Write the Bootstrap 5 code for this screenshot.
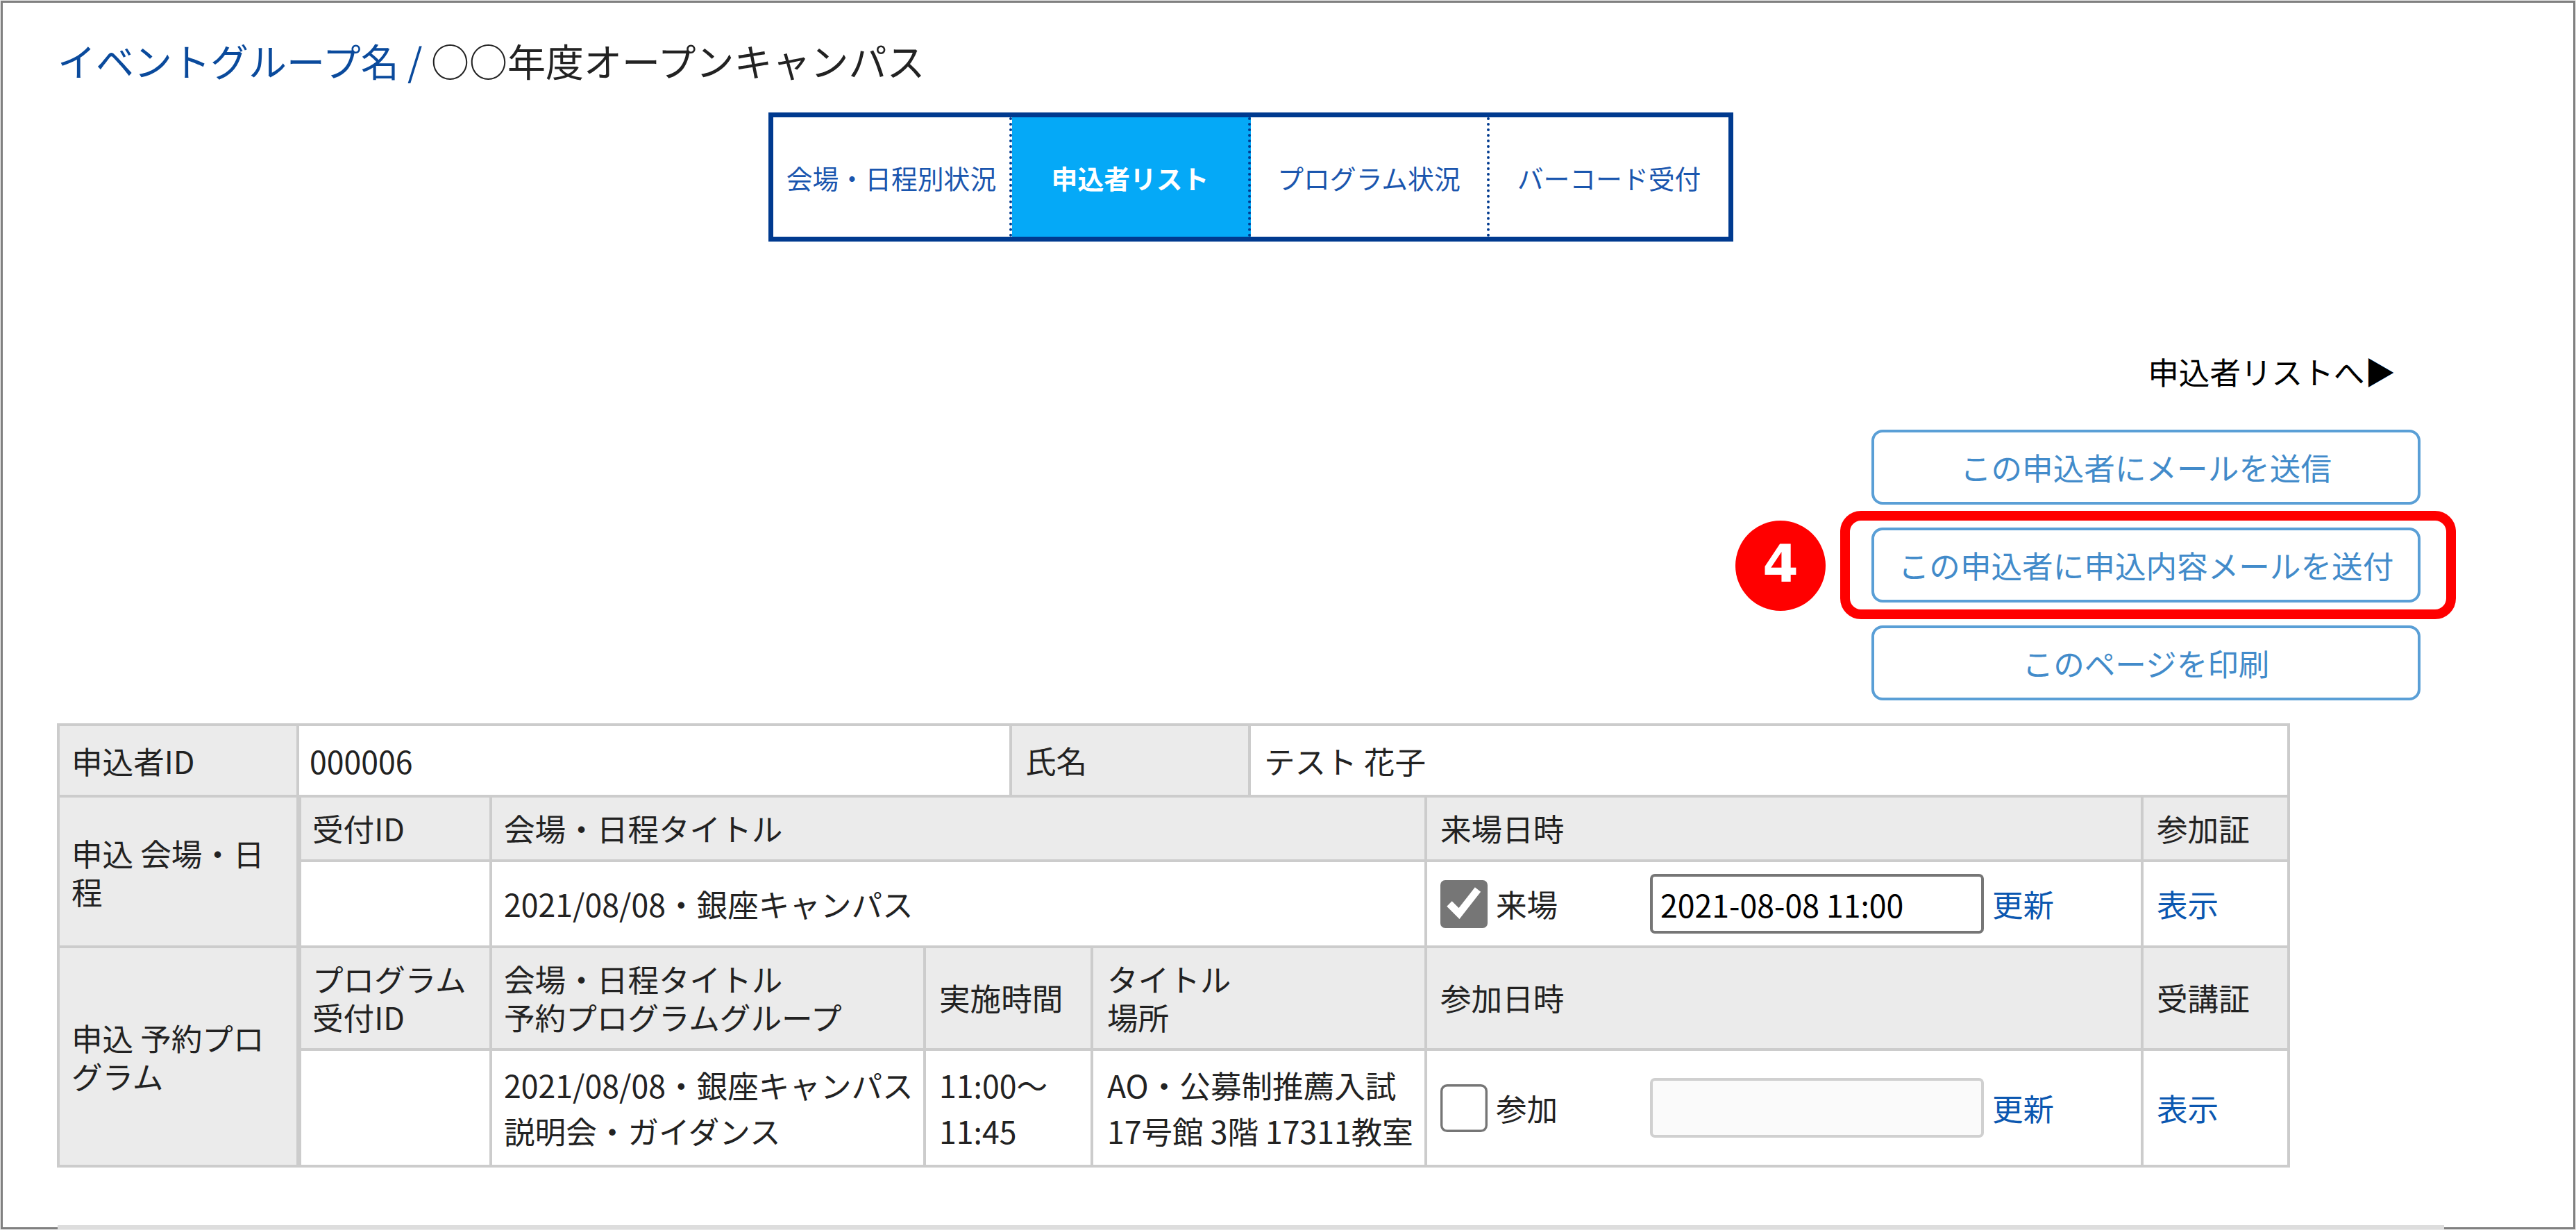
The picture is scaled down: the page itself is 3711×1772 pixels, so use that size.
<!DOCTYPE html>
<html lang="ja">
<head>
    <meta charset="UTF-8">
    <meta name="viewport" content="width=device-width, initial-scale=1.0">
    <title>申込者リスト</title>
    <link href="https://cdn.jsdelivr.net/npm/bootstrap@5.3.0/dist/css/bootstrap.min.css" rel="stylesheet">
    <style>
        body {
            font-family: "Noto Sans CJK JP", sans-serif;
            font-size: 44.6px;
            line-height: 66px;
            color: #222;
            background: #fff;
        }
        a { text-decoration: none; color: #0b57b0; }

        .page-frame {
            width: 3711px;
            height: 1772px;
            border: 1px solid #e9e9e9;
            overflow: hidden;
        }
        .page-inner {
            height: 100%;
            border: 3px solid #808080;
            padding: 0 0 0 79px;
        }

        .page-title { font-size: 55px; line-height: 80px; padding-top: 42px; margin-bottom: 36px; font-weight: 400; }
        .page-title a { color: #0a4a9c; }

        .event-tabs {
            width: 1390px;
            height: 186px;
            margin-left: 1024px;
            border: 7px solid #003a8f;
        }
        .event-tabs .nav-link {
            font-size: 37.8px;
            color: #1a56ae;
            padding: 2px 0 0;
            border-radius: 0;
            border-right: 4px dotted #003a8f;
            white-space: nowrap;
        }
        .event-tabs .nav-link:last-child { border-right: 0; }
        .event-tabs .nav-link.active { background: #05a9f7; color: #fff; font-weight: 700; }

        .side-actions { width: 791px; margin-left: 2613px; padding-top: 154px; }
        .to-list { color: #000; padding-right: 36px; margin-bottom: 51px; }
        .btn-action {
            height: 108px;
            margin-bottom: 33px;
            padding: 0;
            font-size: 44.6px;
            color: #428bca;
            border: 4px solid #5a9fd6;
            border-radius: 16px;
            background: #fff;
        }
        .callout-frame {
            position: absolute;
            left: -45px;
            top: -24px;
            width: 887px;
            height: 156px;
            border: 14px solid #f00;
            border-radius: 30px;
        }
        .callout-num {
            position: absolute;
            left: -196px;
            top: -10px;
            width: 130px;
            height: 130px;
            background: #f00;
            color: #fff;
            font: 700 74px/125px "DejaVu Sans", sans-serif;
        }

        .detail-table {
            width: 3213px;
            table-layout: fixed;
            border-collapse: collapse;
            margin-left: -1px;
        }
        .detail-table th, .detail-table td {
            border: 4px solid #ccc;
            padding: 0 0 0 19px;
            vertical-align: middle;
            text-align: left;
            font-weight: 400;
            white-space: nowrap;
        }
        .detail-table th { background: #ebebeb; line-height: 55px; padding-bottom: 3px; }
        .detail-table .row-head { padding: 0 14px 0 15px; white-space: normal; }
        .detail-table .row-head:first-child { padding-left: 17px; }
        .detail-table .inner-first { box-shadow: inset 3px 0 #ccc; }
        .detail-table .venue-col { padding-left: 17px; }
        .detail-table .place-col { padding-left: 20px; }

        .tick-box { width: 68px; height: 69px; margin-right: 12px; }
        .state-label { width: 222px; }
        .date-input {
            width: 481px;
            height: 86px;
            padding: 0 11px;
            font-size: 44.6px;
            color: #000;
            border: 4px solid #767676;
            border-radius: 7px;
            margin-right: 12px;
        }
        .date-input:disabled { background: #fafafa; border-color: #d0d0d0; }

        .next-block { width: 3438px; height: 8px; margin-top: 83px; background: #ddd; }
    </style>
</head>
<body>
    <div class="page-frame">
        <div class="page-inner">
            <h1 class="page-title"><a href="#">イベントグループ名 /</a> ○○年度オープンキャンパス</h1>

            <nav class="event-tabs nav nav-pills nav-fill flex-nowrap">
                <a class="nav-link d-flex w-25 align-items-center justify-content-center" href="#">会場・日程別状況</a>
                <a class="nav-link d-flex w-25 align-items-center justify-content-center active" href="#">申込者リスト</a>
                <a class="nav-link d-flex w-25 align-items-center justify-content-center" href="#">プログラム状況</a>
                <a class="nav-link d-flex w-25 align-items-center justify-content-center" href="#">バーコード受付</a>
            </nav>

            <div class="side-actions d-flex flex-column">
                <a class="to-list text-end" href="#">申込者リストへ▶</a>
                <button type="button" class="btn btn-action">この申込者にメールを送信</button>
                <div class="position-relative d-flex flex-column">
                    <button type="button" class="btn btn-action">この申込者に申込内容メールを送付</button>
                    <div class="callout-frame"></div>
                    <div class="callout-num rounded-circle text-center">4</div>
                </div>
                <button type="button" class="btn btn-action">このページを印刷</button>
            </div>

            <table class="detail-table">
                <colgroup>
                    <col style="width: 345px">
                    <col style="width: 278px">
                    <col style="width: 625px">
                    <col style="width: 124px">
                    <col style="width: 117px">
                    <col style="width: 227px">
                    <col style="width: 254px">
                    <col style="width: 1032px">
                    <col style="width: 211px">
                </colgroup>
                <tbody>
                    <tr style="height: 103px">
                        <th class="row-head">申込者ID</th>
                        <td class="row-head" colspan="3">000006</td>
                        <th colspan="2">氏名</th>
                        <td colspan="3">テスト 花子</td>
                    </tr>
                    <tr style="height: 93px">
                        <th class="row-head" rowspan="2">申込 会場・日程</th>
                        <th class="inner-first">受付ID</th>
                        <th class="venue-col" colspan="5">会場・日程タイトル</th>
                        <th>来場日時</th>
                        <th>参加証</th>
                    </tr>
                    <tr style="height: 124px">
                        <td class="inner-first"></td>
                        <td class="venue-col" colspan="5">2021/08/08・銀座キャンパス</td>
                        <td>
                            <div class="d-flex align-items-center">
                                <svg class="tick-box" viewBox="0 0 68 69">
                                    <rect width="68" height="69" rx="7" fill="#767676"/>
                                    <path d="M13 34 L27 48 L54 13.5" fill="none" stroke="#fff" stroke-width="10.5"/>
                                </svg>
                                <span class="state-label">来場</span>
                                <input type="text" class="form-control date-input" value="2021-08-08 11:00">
                                <a href="#">更新</a>
                            </div>
                        </td>
                        <td><a href="#">表示</a></td>
                    </tr>
                    <tr style="height: 148px">
                        <th class="row-head" rowspan="2">申込 予約プログラム</th>
                        <th class="inner-first">プログラム<br>受付ID</th>
                        <th class="venue-col">会場・日程タイトル<br>予約プログラムグループ</th>
                        <th colspan="2">実施時間</th>
                        <th class="place-col" colspan="2">タイトル<br>場所</th>
                        <th>参加日時</th>
                        <th>受講証</th>
                    </tr>
                    <tr style="height: 168px">
                        <td class="inner-first"></td>
                        <td class="venue-col">2021/08/08・銀座キャンパス<br>説明会・ガイダンス</td>
                        <td colspan="2">11:00～<br>11:45</td>
                        <td class="place-col" colspan="2">AO・公募制推薦入試<br>17号館 3階 17311教室</td>
                        <td>
                            <div class="d-flex align-items-center">
                                <svg class="tick-box" viewBox="0 0 68 69">
                                    <rect x="1.7" y="1.7" width="64.6" height="65.6" rx="8" fill="#fff" stroke="#767676" stroke-width="3.4"/>
                                </svg>
                                <span class="state-label">参加</span>
                                <input type="text" class="form-control date-input" disabled>
                                <a href="#">更新</a>
                            </div>
                        </td>
                        <td><a href="#">表示</a></td>
                    </tr>
                </tbody>
            </table>

            <div class="next-block"></div>
        </div>
    </div>
    <script src="https://cdn.jsdelivr.net/npm/bootstrap@5.3.0/dist/js/bootstrap.bundle.min.js"></script>
</body>
</html>
